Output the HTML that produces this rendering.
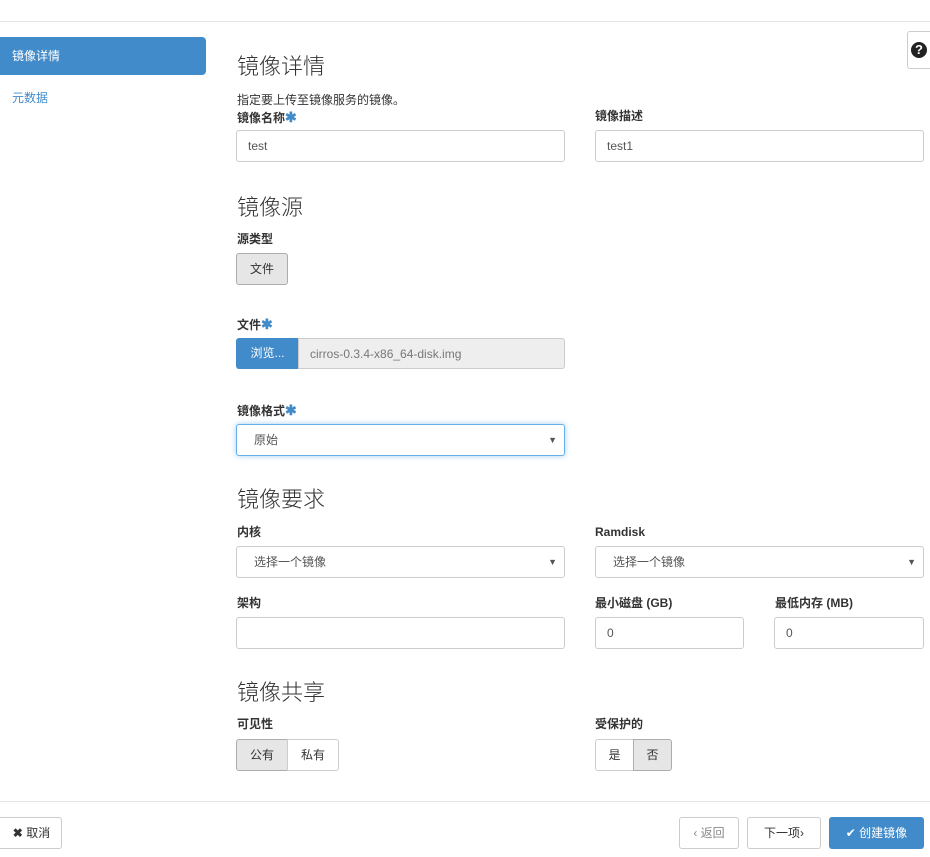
<!DOCTYPE html>
<html><head><meta charset="utf-8"><style>
*{box-sizing:border-box;margin:0;padding:0}
body{width:930px;height:857px;background:#fff;font-family:"Liberation Sans","Noto Sans CJK SC",sans-serif;font-size:12px;color:#333;position:relative;overflow:hidden}
.a{position:absolute}
.h{font-size:22px;color:#333;font-weight:300;line-height:1}
.l{font-weight:bold;font-size:12px;line-height:1}
.star{color:#428bca;font-size:14px}
.in{border:1px solid #ccc;border-radius:3px;height:32px;padding:0 11px;line-height:30px;color:#555;font-size:12px;background:#fff}
.btn{border:1px solid #ccc;border-radius:3px;text-align:center;font-size:12px;background:#fff;color:#333}
.arr{position:absolute;right:7px;top:0;font-size:9px;color:#555}
</style></head><body>
<div class="a" style="left:0;top:21px;width:930px;border-top:1px solid #e5e5e5"></div>
<div class="a" style="left:0;top:37px;width:206px;height:38px;background:#428bca;border-radius:0 4px 4px 0;color:#fff;padding-left:12px;line-height:38px;font-size:12px">镜像详情</div>
<div class="a" style="left:12px;top:89px;color:#428bca">元数据</div>
<div class="a btn" style="left:907px;top:31px;width:30px;height:38px;line-height:36px;font-weight:bold;font-size:15px"><span style="display:inline-block;width:16px;height:16px;border-radius:50%;background:#222;color:#fff;line-height:16px;font-size:13px;margin-left:-6px">?</span></div>

<div class="a h" style="left:237px;top:56px">镜像详情</div>
<div class="a" style="left:237px;top:91px">指定要上传至镜像服务的镜像。</div>
<div class="a l" style="left:237px;top:110px">镜像名称<span class="star">✱</span></div>
<div class="a l" style="left:595px;top:110px">镜像描述</div>
<div class="a in" style="left:236px;top:130px;width:329px">test</div>
<div class="a in" style="left:595px;top:130px;width:329px">test1</div>

<div class="a h" style="left:237px;top:197px">镜像源</div>
<div class="a l" style="left:237px;top:233px">源类型</div>
<div class="a btn" style="left:236px;top:253px;width:52px;height:32px;line-height:30px;background:#e6e6e6;border-color:#adadad">文件</div>

<div class="a l" style="left:237px;top:317px">文件<span class="star">✱</span></div>
<div class="a" style="left:236px;top:338px;width:63px;height:31px;background:#428bca;color:#fff;border-radius:3px 0 0 3px;line-height:31px;text-align:center">浏览...</div>
<div class="a in" style="left:298px;top:338px;width:267px;height:31px;background:#eee;border-radius:0 3px 3px 0;color:#777">cirros-0.3.4-x86_64-disk.img</div>

<div class="a l" style="left:237px;top:403px">镜像格式<span class="star">✱</span></div>
<div class="a in" style="left:236px;top:424px;width:329px;border-color:#66afe9;box-shadow:0 0 6px rgba(102,175,233,.6);padding-left:17px">原始<span class="arr">▼</span></div>

<div class="a h" style="left:237px;top:489px">镜像要求</div>
<div class="a l" style="left:237px;top:526px">内核</div>
<div class="a l" style="left:595px;top:526px">Ramdisk</div>
<div class="a in" style="left:236px;top:546px;width:329px;padding-left:17px">选择一个镜像<span class="arr">▼</span></div>
<div class="a in" style="left:595px;top:546px;width:329px;padding-left:17px">选择一个镜像<span class="arr">▼</span></div>
<div class="a l" style="left:237px;top:597px">架构</div>
<div class="a l" style="left:595px;top:597px">最小磁盘 (GB)</div>
<div class="a l" style="left:775px;top:597px">最低内存 (MB)</div>
<div class="a in" style="left:236px;top:617px;width:329px"></div>
<div class="a in" style="left:595px;top:617px;width:149px">0</div>
<div class="a in" style="left:774px;top:617px;width:150px">0</div>

<div class="a h" style="left:237px;top:682px">镜像共享</div>
<div class="a l" style="left:237px;top:718px">可见性</div>
<div class="a l" style="left:595px;top:718px">受保护的</div>
<div class="a btn" style="left:236px;top:739px;width:52px;height:32px;line-height:30px;background:#e6e6e6;border-color:#adadad;border-radius:3px 0 0 3px">公有</div>
<div class="a btn" style="left:287px;top:739px;width:52px;height:32px;line-height:30px;border-radius:0 3px 3px 0">私有</div>
<div class="a btn" style="left:595px;top:739px;width:39px;height:32px;line-height:30px;border-radius:3px 0 0 3px">是</div>
<div class="a btn" style="left:633px;top:739px;width:39px;height:32px;line-height:30px;background:#e6e6e6;border-color:#adadad;border-radius:0 3px 3px 0">否</div>

<div class="a" style="left:0;top:801px;width:930px;border-top:1px solid #e5e5e5"></div>
<div class="a btn" style="left:-5px;top:817px;width:67px;height:32px;line-height:30px;padding-left:6px"><b>✖</b> 取消</div>
<div class="a btn" style="left:679px;top:817px;width:60px;height:32px;line-height:30px;color:#888">‹ 返回</div>
<div class="a btn" style="left:747px;top:817px;width:74px;height:32px;line-height:30px">下一项›</div>
<div class="a" style="left:829px;top:817px;width:95px;height:32px;line-height:32px;background:#428bca;border-radius:3px;color:#fff;text-align:center">✔ 创建镜像</div>
</body></html>
